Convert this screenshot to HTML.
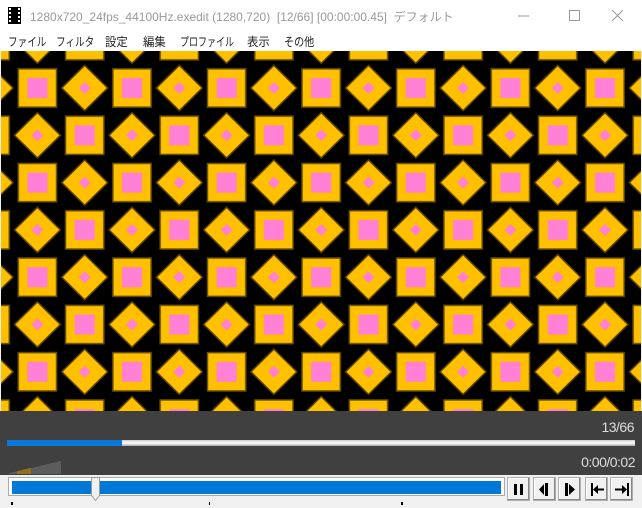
<!DOCTYPE html>
<html><head><meta charset="utf-8"><style>
*{margin:0;padding:0;box-sizing:border-box}
body{width:642px;height:508px;overflow:hidden;background:#f0f0f0;font-family:"Liberation Sans","Noto Sans CJK JP",sans-serif;position:relative}
.abs{position:absolute}
#title{left:0;top:0;width:642px;height:30px;background:#fff}
#title .t{left:30px;top:8px;font-size:12px;color:#999;white-space:nowrap}
#menu{left:0;top:30px;width:642px;height:21px;background:#fff;font-size:12px;color:#222}
#menu span{position:absolute;top:3px;white-space:nowrap;transform-origin:0 0}
#dark{left:0;top:411px;width:642px;height:64px;background:#404040}
.btn{position:absolute;top:477px;width:23px;height:24px;background:#f0f0f0;border:1px solid #adadad;box-shadow:inset -1px -1px 0 #888,inset 1px 1px 0 #fff}
.btn svg{position:absolute;left:0;top:0}
</style></head><body>
<div id="title" class="abs">
 <svg class="abs" style="left:8px;top:7px" width="13" height="17"><rect width="13" height="17" fill="#000"/><g fill="#fff"><rect x="1" y="1" width="2" height="2"/><rect x="1" y="5" width="2" height="2"/><rect x="1" y="9" width="2" height="2"/><rect x="1" y="13" width="2" height="2"/><rect x="10" y="1" width="2" height="2"/><rect x="10" y="5" width="2" height="2"/><rect x="10" y="9" width="2" height="2"/><rect x="10" y="13" width="2" height="2"/></g></svg>
 <div class="t abs">1280x720_24fps_44100Hz.exedit (1280,720)&nbsp; [12/66] [00:00:00.45]&nbsp; デフォルト</div>
 <svg class="abs" style="left:510px;top:8px" width="120" height="16"><line x1="8" y1="8" x2="19" y2="8" stroke="#999"/><rect x="59.5" y="2.5" width="10" height="10" fill="none" stroke="#999"/><path d="M102 2L113 13M113 2L102 13" stroke="#999"/></svg>
</div>
<div id="menu" class="abs">
 <span style="left:8px;transform:scaleX(0.8)">ファイル</span><span style="left:56px;transform:scaleX(0.8)">フィルタ</span><span style="left:105px;transform:scaleX(0.95)">設定</span><span style="left:143px;transform:scaleX(0.95)">編集</span><span style="left:180px;transform:scaleX(0.75)">プロファイル</span><span style="left:247px;transform:scaleX(0.95)">表示</span><span style="left:284px;transform:scaleX(0.84)">その他</span>
</div>
<svg class="abs" style="left:1px;top:51px" width="640" height="360">
<defs>
<pattern id="p" patternUnits="userSpaceOnUse" width="94.6" height="94.6" x="12.75" y="13.35">
 <g id="sq"><rect x="4.5" y="4.5" width="38.3" height="38.3" fill="#ffc000" stroke="#6a5000" stroke-width="1.5"/><rect x="13.65" y="13.65" width="20" height="20" fill="#ff80d4"/></g>
 <use href="#sq" x="47.3" y="47.3"/>
 <g id="dm"><polygon points="70.95,1 93.95,23.65 70.95,46.3 47.95,23.65" fill="#ffc000" stroke="#5a4000" stroke-width="1.5"/><polygon points="70.95,17.65 76.95,23.65 70.95,29.65 64.95,23.65" fill="#ff80d4"/></g>
 <use href="#dm" x="-47.3" y="47.3"/>
</pattern>
</defs>
<rect width="640" height="360" fill="#000"/>
<rect width="640" height="360" fill="url(#p)"/>
</svg>
<div id="dark" class="abs">
 <div class="abs" style="right:8px;top:8px;color:#ddd;font-size:14px;letter-spacing:-0.5px">13/66</div>
 <div class="abs" style="left:7px;top:29px;width:628px;height:6px;background:linear-gradient(#ccc,#fff,#aaa)"></div>
 <div class="abs" style="left:7px;top:29px;width:115px;height:6px;background:#0a78d7"></div>
 <svg class="abs" style="left:8px;top:44px" width="55" height="20">
  <g stroke="#777" stroke-width="1">
   <path d="M2 19v-1M4 19v-1.5M6 19v-2M8 19v-2.5M24 19v-6M26 19v-6.5M28 19v-7M30 19v-7.5M32 19v-8M34 19v-8.5M36 19v-9M38 19v-9.5M40 19v-10M42 19v-10.5M44 19v-11M46 19v-11.5M48 19v-12M50 19v-12.5M52 19v-13"/>
  </g>
  <g stroke="#e0a000"><path d="M10 19v-3M12 19v-3.5M14 19v-4M16 19v-4.5M18 19v-5M20 19v-5.5M22 19v-6"/></g>
 </svg>
 <div class="abs" style="right:7px;top:43px;color:#ddd;font-size:14px;letter-spacing:-0.5px">0:00/0:02</div>
</div>
<div class="abs" style="left:8px;top:477px;width:497px;height:19px;background:#fff;border:1px solid #aaa"></div>
<div class="abs" style="left:12px;top:481px;width:489px;height:13px;background:#0078d7"></div>
<svg class="abs" style="left:91px;top:477px" width="10" height="25"><path d="M0.5 0.5h8v18l-4 5l-4-5z" fill="#f0f0f0" stroke="#999"/></svg>
<div class="abs" style="left:11px;top:502px;width:2px;height:3px;background:#000"></div>
<div class="abs" style="left:209px;top:502px;width:1px;height:3px;background:#000"></div>
<div class="abs" style="left:401px;top:502px;width:2px;height:3px;background:#000"></div>
<div class="btn" style="left:507px"><svg width="23" height="24"><rect x="6" y="6" width="3" height="11"/><rect x="12" y="6" width="3" height="11"/></svg></div>
<div class="btn" style="left:533px"><svg width="23" height="24"><path d="M5 11.5L10 6v11z"/><rect x="11" y="5" width="3" height="13"/></svg></div>
<div class="btn" style="left:558px"><svg width="23" height="24"><rect x="6" y="5" width="3" height="13"/><path d="M10 6v11l6-5.5z"/></svg></div>
<div class="btn" style="left:585px"><svg width="23" height="24"><rect x="5" y="5" width="2" height="13"/><path d="M7 11.5L12 7v9z"/><rect x="11" y="10.5" width="7" height="2"/></svg></div>
<div class="btn" style="left:610px"><svg width="23" height="24"><rect x="16" y="5" width="2" height="13"/><path d="M16 11.5L11 7v9z"/><rect x="4" y="10.5" width="8" height="2"/></svg></div>
</body></html>
